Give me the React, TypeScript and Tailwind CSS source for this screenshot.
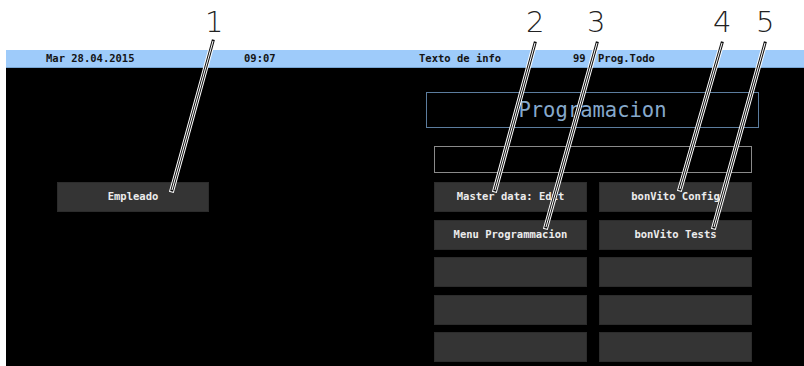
import React from "react";

const mono = { fontFamily: '"DejaVu Sans Mono", "Liberation Mono", monospace' };

function Btn({ label }: { label?: string }) {
  return (
    <div
      className="h-[30px] bg-[#343434] border border-[#2c2c2c] flex items-center justify-center text-[10.5px] font-bold text-[#ececec]"
      style={mono}
    >
      {label}
    </div>
  );
}

const lines: [number, number, number, number][] = [
  [213, 41, 172, 190],
  [535, 43, 495, 190],
  [597, 43, 546, 227],
  [722, 43, 680, 189],
  [765, 43, 714, 227],
];

export default function App() {
  return (
    <div className="relative w-[804px] h-[366px] bg-white overflow-hidden">
      <div className="h-[50px]" />
      <div className="ml-[6px] h-[316px] flex flex-col">
        <div
          className="h-[18px] bg-[#9ecbfa] border-b border-[#78a6d3] flex items-center text-[10.5px] font-bold text-[#141414]"
          style={mono}
        >
          <span className="ml-[40px] w-[198px]">Mar 28.04.2015</span>
          <span className="w-[175px]">09:07</span>
          <span className="w-[154px]">Texto de info</span>
          <span className="w-[25px]">99</span>
          <span>Prog.Todo</span>
        </div>
        <div className="flex-1 bg-black flex">
          <div className="w-[420px] pt-[114px] pl-[51px]">
            <div className="w-[152px]">
              <Btn label="Empleado" />
            </div>
          </div>
          <div className="w-[333px] pt-[24px] flex flex-col">
            <div
              className="h-[36px] border border-[#5c7d9e] flex items-center justify-center text-[20.5px] text-[#86a9cc]"
              style={mono}
            >
              Programacion
            </div>
            <div className="ml-[8px] mt-[18px] w-[318px] h-[27px] border border-[#8a8a8a]" />
            <div className="ml-[8px] mt-[9px] w-[318px] grid grid-cols-2 gap-x-[12px] gap-y-[7.5px]">
              <Btn label="Master data: Edit" />
              <Btn label="bonVito Config" />
              <Btn label="Menu Programmacion" />
              <Btn label="bonVito Tests" />
              <Btn />
              <Btn />
              <Btn />
              <Btn />
              <Btn />
              <Btn />
            </div>
          </div>
        </div>
      </div>

      <svg className="absolute inset-0 pointer-events-none" width="804" height="366">
        {lines.map(([x1, y1, x2, y2], i) => (
          <g key={i}>
            <line x1={x1} y1={y1} x2={x2} y2={y2} stroke="#ffffff" strokeWidth={5} strokeLinecap="square" />
            <line x1={x1} y1={y1} x2={x2} y2={y2} stroke="#111111" strokeWidth={3} strokeLinecap="square" />
            <line x1={x1} y1={y1} x2={x2} y2={y2} stroke="#ffffff" strokeWidth={1} strokeLinecap="butt" />
          </g>
        ))}
      </svg>

      {[
        ["1", 205],
        ["2", 526],
        ["3", 587],
        ["4", 713],
        ["5", 756],
      ].map(([n, x]) => (
        <span
          key={n as string}
          className="absolute top-[4px] text-[29px] leading-[36px] text-[#222] font-light"
          style={{ left: x as number, fontFamily: '"DejaVu Sans", "Open Sans", sans-serif' }}
        >
          {n}
        </span>
      ))}
    </div>
  );
}
